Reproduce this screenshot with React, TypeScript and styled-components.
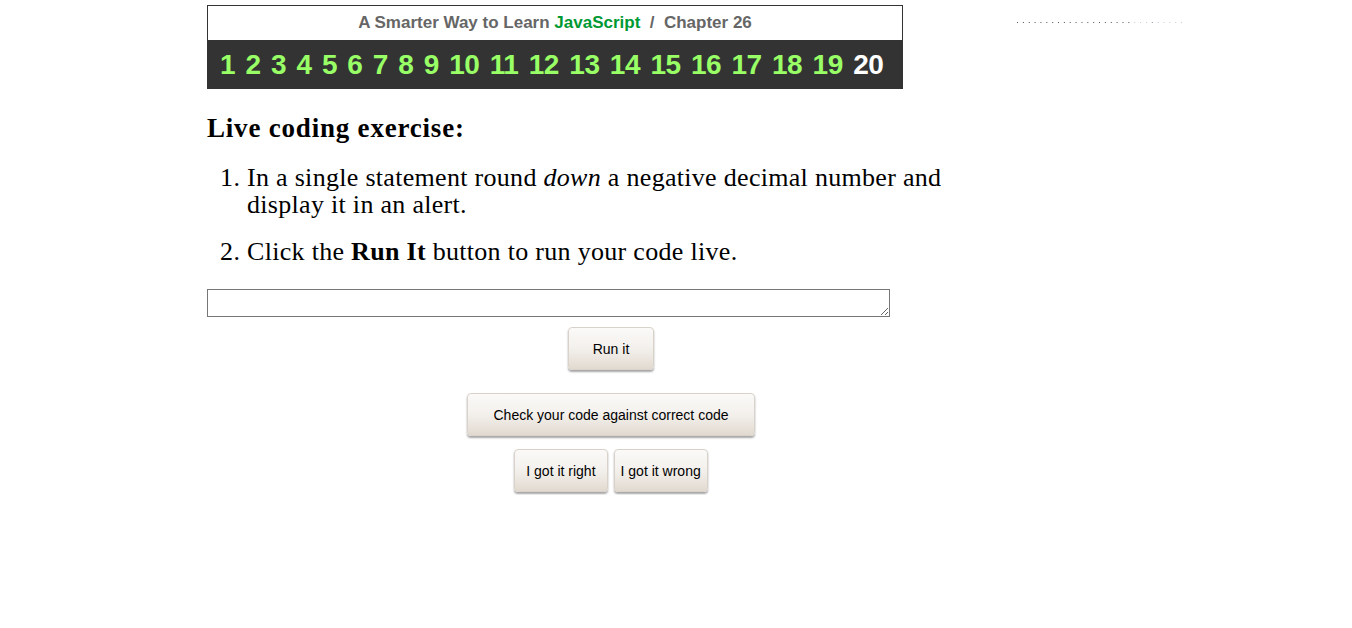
import React from "react";
import styled, { createGlobalStyle } from "styled-components";

const Global = createGlobalStyle`
  html, body { margin: 0; padding: 0; background: #fff; }
  body { font-family: "Liberation Serif", "Times New Roman", serif; color: #000; }
`;

const Page = styled.div`
  display: flex;
  align-items: flex-start;
  padding: 5px 0 0 207px;
`;

const Main = styled.main`
  width: 808px;
  display: flex;
  flex-direction: column;
`;

const Sidebar = styled.aside`
  margin-left: 2px;
  padding-top: 15px;
  line-height: 0;
`;

const Header = styled.header`
  width: 696px;
  box-sizing: border-box;
  border: 1px solid #333;
  border-bottom: none;
`;

const Title = styled.div`
  height: 34px;
  display: flex;
  align-items: center;
  justify-content: center;
  font-family: "Liberation Sans", Arial, sans-serif;
  font-weight: bold;
  font-size: 17px;
  color: #666;
  white-space: pre;
`;

const Green = styled.span`
  color: #009933;
`;

const Chapters = styled.nav`
  background: #333;
  height: 49px;
  margin: 0 -1px;
  display: flex;
  align-items: center;
  padding-left: 13px;
  gap: 10.4px;
  font-family: "Liberation Sans", Arial, sans-serif;
  font-weight: bold;
  font-size: 28px;
`;

const ChapterLink = styled.span<{ $current?: boolean }>`
  color: ${(p) => (p.$current ? "#ffffff" : "#99ff66")};
  letter-spacing: -0.5px;
`;

const Heading = styled.h2`
  margin: 24px 0 0;
  font-size: 27px;
  letter-spacing: 0.8px;
  font-weight: bold;
  line-height: 30px;
`;

const List = styled.ol`
  margin: 21px 60px 0 0;
  padding-left: 40px;
  font-size: 26px;
  letter-spacing: 0.3px;
  line-height: 27px;
`;

const Item = styled.li`
  margin-bottom: 20px;
  &:last-child { margin-bottom: 0; }
`;

const CodeBox = styled.textarea`
  margin-top: 24px;
  width: 683px;
  height: 28px;
  box-sizing: border-box;
  border: 1px solid #767676;
  padding: 2px;
  font-family: "Liberation Mono", monospace;
  font-size: 13px;
  display: block;
`;

const ButtonRow = styled.div<{ $top: number }>`
  display: flex;
  justify-content: center;
  gap: 6px;
  margin-top: ${(p) => p.$top}px;
  padding-bottom: 3px;
`;

const Button = styled.button<{ $pad?: number }>`
  height: 43px;
  padding: 0 ${(p) => p.$pad ?? 24}px;
  font-family: "Liberation Sans", Arial, sans-serif;
  font-size: 14px;
  color: #000;
  border: 1px solid #d8d2ca;
  border-radius: 4px;
  background: linear-gradient(#fbfaf8 0%, #f3f0ec 50%, #e2dad0 100%);
  box-shadow: 0 2px 2px rgba(0, 0, 0, 0.35);
  cursor: pointer;
`;

const Dots = () => (
  <svg width="168" height="4" viewBox="0 0 168 4">
    {Array.from({ length: 29 }).map((_, i) => (
      <rect
        key={i}
        x={i * 5.86}
        y={1}
        width={1}
        height={1}
        fill={i < 20 ? "#555" : i === 23 ? "#8888aa" : "#c8c8d0"}
      />
    ))}
  </svg>
);

export default function App() {
  const nums = Array.from({ length: 20 }, (_, i) => i + 1);
  return (
    <>
      <Global />
      <Page>
        <Main>
          <Header>
            <Title>
              A Smarter Way to Learn <Green>JavaScript</Green>  /  Chapter 26
            </Title>
            <Chapters>
              {nums.map((n) => (
                <ChapterLink key={n} $current={n === 20}>
                  {n}
                </ChapterLink>
              ))}
            </Chapters>
          </Header>
          <Heading>Live coding exercise:</Heading>
          <List>
            <Item>
              In a single statement round <em>down</em> a negative decimal number and display it in an
              alert.
            </Item>
            <Item>
              Click the <strong>Run It</strong> button to run your code live.
            </Item>
          </List>
          <CodeBox />
          <ButtonRow $top={10}>
            <Button>Run it</Button>
          </ButtonRow>
          <ButtonRow $top={20}>
            <Button $pad={25}>Check your code against correct code</Button>
          </ButtonRow>
          <ButtonRow $top={10}>
            <Button $pad={11}>I got it right</Button>
            <Button $pad={6}>I got it wrong</Button>
          </ButtonRow>
        </Main>
        <Sidebar>
          <Dots />
        </Sidebar>
      </Page>
    </>
  );
}
